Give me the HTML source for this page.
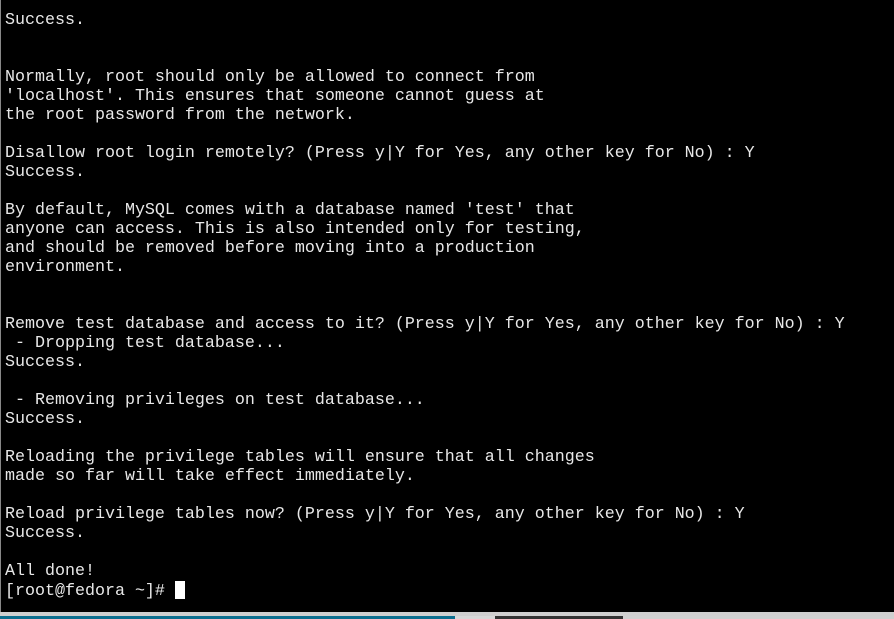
<!DOCTYPE html>
<html><head><meta charset="utf-8"><style>
html,body{margin:0;padding:0;width:894px;height:619px;overflow:hidden;background:#000}
#t{position:absolute;left:0;top:0;width:894px;height:612px;background:#000;border-left:1px solid #888;box-sizing:border-box}
pre{margin:0;position:absolute;left:4px;top:11px;font-family:"Liberation Mono",monospace;font-size:16.67px;line-height:19px;color:#e8e8e8}
.cur{display:inline-block;width:10px;height:18px;background:#fff;vertical-align:-4px}
#g{position:absolute;left:0;top:612px;width:894px;height:4px;background:#cfcfcf}
.b{position:absolute;top:616px;height:3px}
</style></head><body>
<div id="t"><pre>Success.


Normally, root should only be allowed to connect from
'localhost'. This ensures that someone cannot guess at
the root password from the network.

Disallow root login remotely? (Press y|Y for Yes, any other key for No) : Y
Success.

By default, MySQL comes with a database named 'test' that
anyone can access. This is also intended only for testing,
and should be removed before moving into a production
environment.


Remove test database and access to it? (Press y|Y for Yes, any other key for No) : Y
 - Dropping test database...
Success.

 - Removing privileges on test database...
Success.

Reloading the privilege tables will ensure that all changes
made so far will take effect immediately.

Reload privilege tables now? (Press y|Y for Yes, any other key for No) : Y
Success.

All done!
[root@fedora ~]# <span class="cur"></span></pre></div>
<div id="g"></div>
<div class="b" style="left:0;width:455px;background:#0b6e8e"></div>
<div class="b" style="left:455px;width:40px;background:#d8d8d8"></div>
<div class="b" style="left:495px;width:128px;background:#333"></div>
<div class="b" style="left:623px;width:271px;background:#d0d0d0"></div>
</body></html>
